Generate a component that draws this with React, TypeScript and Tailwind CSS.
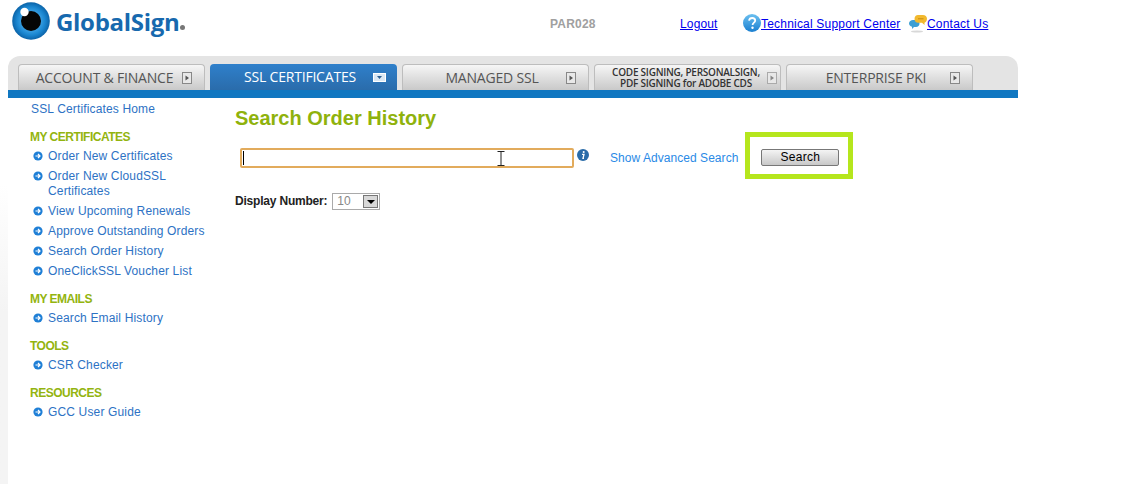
const tabs = [
  { label: "ACCOUNT & FINANCE", labelClass: "w-[153px]" },
  { label: "SSL CERTIFICATES", labelClass: "ml-[10px] w-[140px]", active: true },
  { label: "MANAGED SSL", labelClass: "ml-[10px] w-[140px]" },
  { label: "CODE SIGNING, PERSONALSIGN,\nPDF SIGNING for ADOBE CDS", labelClass: "ml-[6px] w-[152px]", small: true },
  { label: "ENTERPRISE PKI", labelClass: "ml-[10px] w-[140px]" },
];

const sections = [
  {
    title: "MY CERTIFICATES",
    items: [
      "Order New Certificates",
      "Order New CloudSSL Certificates",
      "View Upcoming Renewals",
      "Approve Outstanding Orders",
      "Search Order History",
      "OneClickSSL Voucher List",
    ],
  },
  { title: "MY EMAILS", items: ["Search Email History"] },
  { title: "TOOLS", items: ["CSR Checker"] },
  { title: "RESOURCES", items: ["GCC User Guide"] },
];

function Eye() {
  return (
    <svg width="40" height="40" viewBox="0 0 40 40" className="shrink-0">
      <defs>
        <radialGradient id="iris">
          <stop offset="45%" stopColor="#3fa4e6" />
          <stop offset="75%" stopColor="#1a86d0" />
          <stop offset="100%" stopColor="#0b63a8" />
        </radialGradient>
      </defs>
      <circle cx="20" cy="20" r="18.8" fill="url(#iris)" />
      <circle cx="20" cy="20" r="10" fill="#050505" />
      <circle cx="13.5" cy="11" r="4.2" fill="#fff" />
    </svg>
  );
}

function HelpIcon() {
  return (
    <svg width="18" height="18" viewBox="0 0 18 18" className="shrink-0">
      <defs>
        <linearGradient id="help" x1="0" y1="0" x2="0" y2="1">
          <stop offset="0%" stopColor="#6cc0f0" />
          <stop offset="100%" stopColor="#1a7fd0" />
        </linearGradient>
      </defs>
      <circle cx="9" cy="9" r="9" fill="url(#help)" />
      <path d="M6 6.6C6.3 4.8 7.6 4 9.2 4c1.7 0 3 1 3 2.6 0 2-2.6 2.2-2.6 4.4" fill="none" stroke="#fff" strokeWidth="1.8" />
      <circle cx="9.5" cy="13.8" r="1.2" fill="#fff" />
    </svg>
  );
}

function ChatIcon() {
  return (
    <svg width="18" height="19" viewBox="0 0 18 19" className="shrink-0">
      <ellipse cx="8" cy="17.5" rx="6" ry="1" fill="#d8d8d8" />
      <path d="M4 6h3c2 0 3.500 1.500 3.500 3.500S9 13 7 13H5l-2 2v-2.300C1.300 12.200 0 11 0 9.500 0 7.500 2 6 4 6z" fill="#3d9fd4" />
      <path d="M9 1h5c2.200 0 4 1.500 4 3.800S16.500 8.500 15.500 8.700V11L13 8.800H9c-2 0-3.500-1.700-3.500-3.900S7 1 9 1z" fill="#f2b92e" />
      <path d="M9 4.800h5.500" stroke="#c98a10" strokeWidth="1" />
    </svg>
  );
}

function TabArrow({ active, small }: { active?: boolean; small?: boolean }) {
  if (active) {
    return (
      <svg width="13" height="9" viewBox="0 0 13 9" className="ml-auto mr-[11px] shrink-0">
        <rect x="0.5" y="0.5" width="12" height="8" fill="#dbe8f4" stroke="#fff" />
        <path d="M4 3h5L6.500 6z" fill="#2a5f94" />
      </svg>
    );
  }
  return (
    <svg width="10" height="12" viewBox="0 0 10 12" className={small ? "ml-auto mr-[3px] shrink-0" : "ml-auto mr-[12px] shrink-0"}>
      <rect x="0.5" y="0.5" width="9" height="11" fill="#e8e8e8" stroke={small ? "#aaa" : "#888"} />
      <path d="M3.500 3.500v5L7 6z" fill={small ? "#888" : "#555"} />
    </svg>
  );
}

function Bullet() {
  return (
    <svg width="10" height="10" viewBox="0 0 10 10" className="shrink-0 mt-[2px]">
      <circle cx="5" cy="5" r="4.6" fill="#1f7fd6" />
      <path d="M2.500 5h4M5 3l2 2-2 2" fill="none" stroke="#fff" strokeWidth="1.2" />
    </svg>
  );
}

export default function App() {
  return (
    <div className="w-[1127px] h-[484px] overflow-hidden bg-white font-['Liberation_Sans',Arial,sans-serif]">
      {/* Header */}
      <header className="flex h-[56px] text-[12px] leading-[15px]">
        <div className="flex ml-[11px] mt-[1px] w-[539px]">
          <Eye />
          <span className="ml-[5px] mt-[6px] text-[24px] leading-[30px] font-bold tracking-[-0.3px] text-[#1769ae] font-['Open_Sans',sans-serif]">
            GlobalSign
          </span>
          <span className="mt-[24px] ml-[1px] h-[5px] w-[5px] rounded-full bg-[#777]" />
        </div>
        <span className="mt-[17px] w-[130px] font-bold text-[#a0a0a0] tracking-[0.2px]">PAR028</span>
        <a className="mt-[17px] w-[63px] text-[#0000ee] underline tracking-[0.15px]">Logout</a>
        <div className="mt-[14px] flex w-[166px]">
          <HelpIcon />
          <a className="mt-[3px] text-[#0000ee] underline tracking-[0.2px]">Technical Support Center</a>
        </div>
        <div className="mt-[14px] flex">
          <ChatIcon />
          <a className="mt-[3px] text-[#0000ee] underline tracking-[0.2px]">Contact Us</a>
        </div>
      </header>

      <div className="flex">
        <div className="h-[428px] w-[8px] bg-gradient-to-b from-white from-[30%] to-[#f4f4f4] to-[60%]" />
        <div className="w-[1010px]">
          {/* Tabs */}
          <nav className="h-[42px] rounded-t-[12px] bg-[#e4e4e4] flex flex-col justify-end">
            <div className="flex gap-[5px] pl-[10px]">
              {tabs.map((tab) => (
                <div
                  key={tab.label}
                  className={
                    tab.active
                      ? "flex h-[26px] w-[187px] items-center rounded-t-[4px] bg-gradient-to-b from-[#2f80cb] to-[#2a6cab] pl-[10px] text-white"
                      : "flex h-[26px] w-[187px] items-center rounded-t-[4px] border border-b-0 border-[#bdbdbd] bg-gradient-to-b from-[#f6f6f6] to-[#c9c9c9] pl-[9px] text-[#555]"
                  }
                >
                  <span
                    className={
                      tab.small
                        ? `${tab.labelClass} shrink-0 whitespace-pre-line text-center font-['Open_Sans',sans-serif] text-[10px] leading-[11px] font-semibold tracking-[-0.25px] text-[#333]`
                        : `${tab.labelClass} shrink-0 text-center font-['Open_Sans',sans-serif] text-[14px] leading-[20px] tracking-[-0.2px]`
                    }
                  >
                    {tab.label}
                  </span>
                  <TabArrow active={tab.active} small={tab.small} />
                </div>
              ))}
            </div>
            <div className="h-[8px] bg-[#1077c1]" />
          </nav>

          <div className="flex">
            {/* Sidebar */}
            <aside className="w-[227px] pl-[22px] pt-[4px] text-[12px] leading-[15px] tracking-[0.15px] text-[#2d72c4]">
              <a className="block pl-[1px]">SSL Certificates Home</a>
              {sections.map((section) => (
                <div key={section.title} className="mt-[13px]">
                  <h3 className="font-bold text-[#93b40f] tracking-[-0.5px]">{section.title}</h3>
                  <ul className="mt-[4px] flex flex-col gap-[5px]">
                    {section.items.map((item) => (
                      <li key={item} className="flex gap-[5px] pl-[3px]">
                        <Bullet />
                        <a className="w-[165px]">{item}</a>
                      </li>
                    ))}
                  </ul>
                </div>
              ))}
            </aside>

            {/* Main */}
            <main className="flex-1 pt-[8px]">
              <h1 className="text-[20px] leading-[24px] font-bold text-[#8fb20c]">Search Order History</h1>
              <div className="mt-[2px] flex items-start">
                <div className="relative ml-[5px] mt-[16px] h-[20px] w-[334px] rounded-[2px] border-2 border-[#e2ab5c] bg-white">
                  <span className="absolute left-[1px] top-[1px] h-[14px] w-px bg-black" />
                  <svg width="8" height="15" viewBox="0 0 8 15" className="absolute left-[255px] top-[1px]">
                    <path d="M0.500 0.500h7M4 0.500v14M0.500 14.500h7" fill="none" stroke="#222" />
                  </svg>
                </div>
                <svg width="12" height="12" viewBox="0 0 12 12" className="ml-[3px] mt-[17px] shrink-0">
                  <circle cx="6" cy="6" r="6" fill="#2a6ba8" />
                  <circle cx="6.7" cy="3" r="1" fill="#fff" />
                  <path d="M5 5.300h2l-1 4h1" fill="none" stroke="#fff" strokeWidth="1.3" />
                </svg>
                <a className="ml-[21px] mt-[19px] text-[12px] leading-[15px] tracking-[0.05px] text-[#2a8ae6]">Show Advanced Search</a>
                <div className="ml-[7px] flex h-[47px] w-[108px] items-center justify-center border-[5px] border-[#b5e61d] pl-[2px] pt-[3px]">
                  <button className="h-[17px] w-[78px] rounded-[2px] border border-[#777] bg-gradient-to-b from-[#f4f4f4] to-[#c8c8c8] text-[12px] leading-[15px] tracking-[0.3px] text-black">
                    Search
                  </button>
                </div>
              </div>
              <div className="mt-[14px] flex items-center text-[12px] leading-[15px]">
                <span className="font-bold text-[#222] tracking-[-0.2px]">Display Number:</span>
                <div className="ml-[5px] flex h-[17px] w-[48px] items-center justify-between border border-[#aaa] pl-[4px] pr-[1px] text-[#888]">
                  10
                  <span className="flex h-[13px] w-[15px] items-center justify-center border border-[#777] bg-[#d8d8d8]">
                    <span className="border-x-[4px] border-t-[4px] border-x-transparent border-t-black" />
                  </span>
                </div>
              </div>
            </main>
          </div>
        </div>
      </div>
    </div>
  );
}
